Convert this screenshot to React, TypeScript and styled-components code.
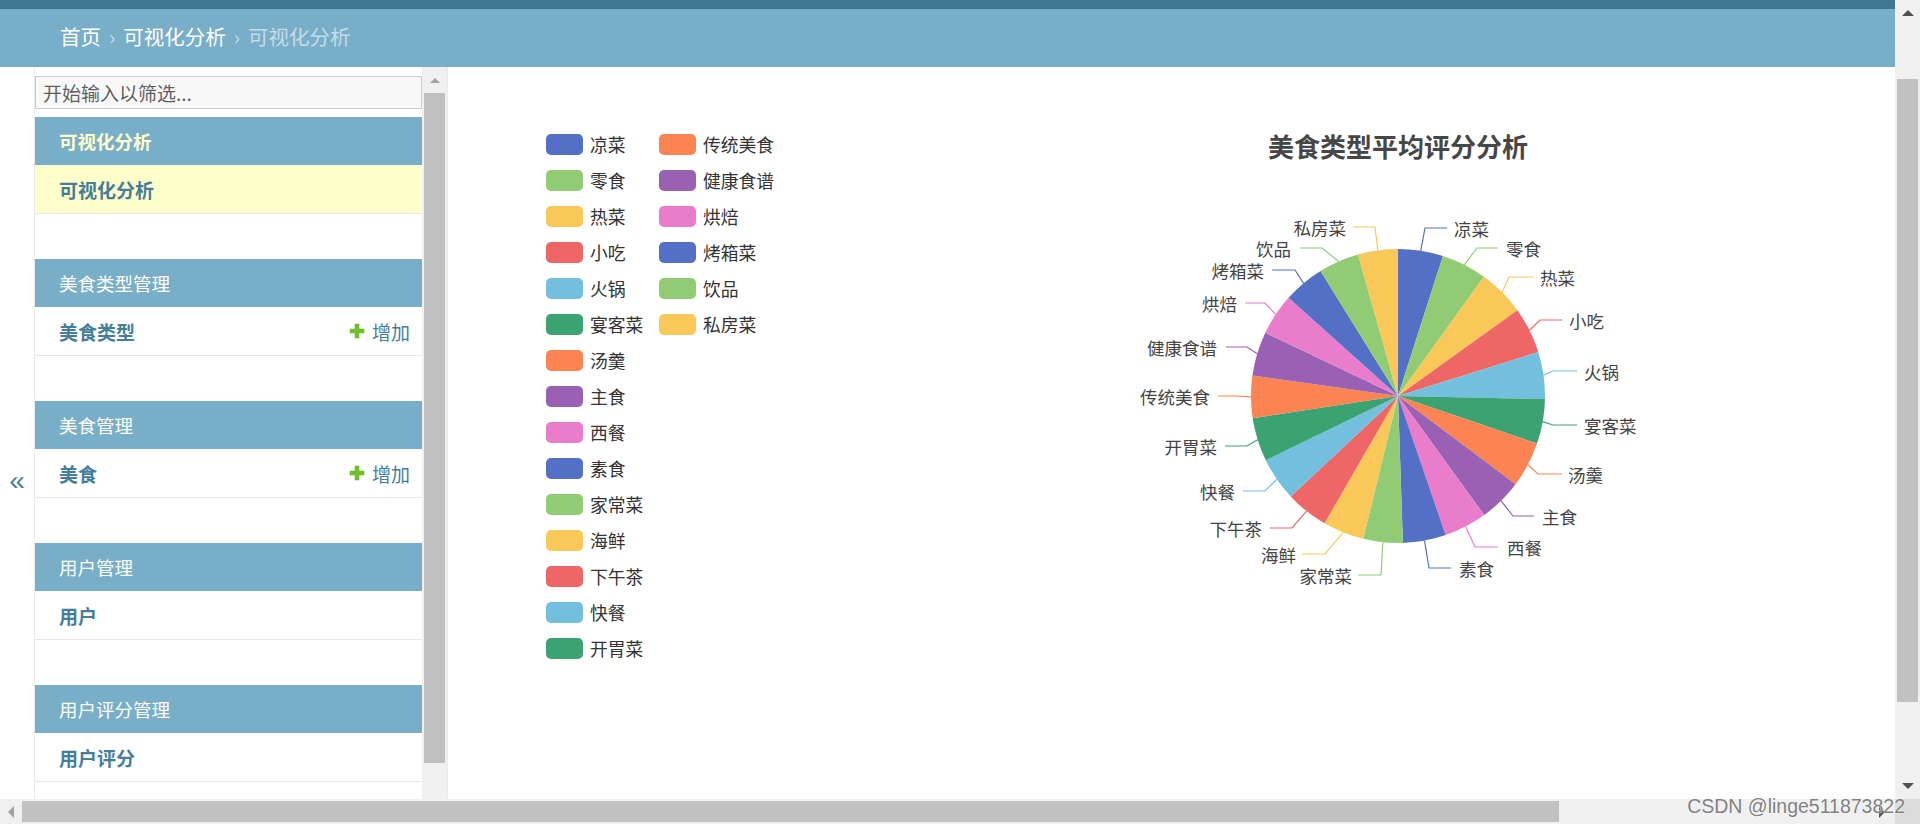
import styled, { createGlobalStyle } from "styled-components";

const GlobalStyle = createGlobalStyle`
  html, body {
    margin: 0;
    padding: 0;
    width: 1920px;
    height: 824px;
    overflow: hidden;
    background: #fff;
  }
  body {
    font-family: "Noto Sans CJK SC", "Noto Sans", "Liberation Sans", sans-serif;
  }
`;

const PALETTE = ["#5470c6", "#91cc75", "#fac858", "#ee6666", "#73c0de", "#3ba272", "#fc8452", "#9a60b4", "#ea7ccc"];

// name, end angle of the slice (deg, clockwise from 12 o'clock), label elbow, line end x, text x
const foods: { name: string; end: number; elbow: [number, number]; lineEnd: number; textX: number }[] = [
  { name: "凉菜", end: 17.8, elbow: [1425, 228], lineEnd: 1447, textX: 1454 },
  { name: "零食", end: 35.8, elbow: [1477, 248], lineEnd: 1498, textX: 1506 },
  { name: "热菜", end: 54.3, elbow: [1509, 277], lineEnd: 1533, textX: 1540 },
  { name: "小吃", end: 72.6, elbow: [1540, 320], lineEnd: 1562, textX: 1569 },
  { name: "火锅", end: 91.2, elbow: [1553, 371], lineEnd: 1577, textX: 1584 },
  { name: "宴客菜", end: 108.9, elbow: [1553, 425], lineEnd: 1577, textX: 1584 },
  { name: "汤羹", end: 126.9, elbow: [1538, 474], lineEnd: 1562, textX: 1568 },
  { name: "主食", end: 144.1, elbow: [1513, 516], lineEnd: 1534, textX: 1542 },
  { name: "西餐", end: 161.1, elbow: [1475, 547], lineEnd: 1498, textX: 1507 },
  { name: "素食", end: 178.1, elbow: [1429, 568], lineEnd: 1451, textX: 1459 },
  { name: "家常菜", end: 193.7, elbow: [1381, 575], lineEnd: 1358, textX: 1352 },
  { name: "海鲜", end: 210, elbow: [1325, 554], lineEnd: 1302, textX: 1296 },
  { name: "下午茶", end: 226.9, elbow: [1292, 528], lineEnd: 1270, textX: 1262 },
  { name: "快餐", end: 244.1, elbow: [1265, 491], lineEnd: 1243, textX: 1235 },
  { name: "开胃菜", end: 261.3, elbow: [1247, 446], lineEnd: 1225, textX: 1217 },
  { name: "传统美食", end: 278, elbow: [1236, 396], lineEnd: 1218, textX: 1210 },
  { name: "健康食谱", end: 295.5, elbow: [1247, 347], lineEnd: 1226, textX: 1217 },
  { name: "烘焙", end: 311.9, elbow: [1265, 303], lineEnd: 1245, textX: 1237 },
  { name: "烤箱菜", end: 328.2, elbow: [1295, 270], lineEnd: 1272, textX: 1264 },
  { name: "饮品", end: 344.2, elbow: [1322, 248], lineEnd: 1300, textX: 1291 },
  { name: "私房菜", end: 360, elbow: [1375, 227], lineEnd: 1353, textX: 1346 },
];

const modules = [
  { title: "可视化分析", model: "可视化分析", current: true, add: false },
  { title: "美食类型管理", model: "美食类型", current: false, add: true },
  { title: "美食管理", model: "美食", current: false, add: true },
  { title: "用户管理", model: "用户", current: false, add: false },
  { title: "用户评分管理", model: "用户评分", current: false, add: false },
];

const CX = 1398;
const CY = 396;
const R = 147;

const pt = (deg: number, r = R) => {
  const a = (deg * Math.PI) / 180;
  return [CX + r * Math.sin(a), CY - r * Math.cos(a)];
};

const slicePath = (a0: number, a1: number) => {
  const [x0, y0] = pt(a0);
  const [x1, y1] = pt(a1);
  const large = a1 - a0 > 180 ? 1 : 0;
  return `M ${CX} ${CY} L ${x0} ${y0} A ${R} ${R} 0 ${large} 1 ${x1} ${y1} Z`;
};

const PlusIcon = () => (
  <svg width="16" height="16" viewBox="0 0 16 16">
    <path d="M6 1h4v5h5v4h-5v5H6v-5H1V6h5z" fill="#70bf2b" stroke="#70bf2b" strokeWidth="0.6" strokeLinejoin="round" />
  </svg>
);

const PieChart = () => (
  <PieSvg width="540" height="460" viewBox="1128 166 540 460">
    {foods.map((f, i) => {
      const start = i === 0 ? 0 : foods[i - 1].end;
      const color = PALETTE[i % PALETTE.length];
      return <path key={f.name} d={slicePath(start, f.end)} fill={color} />;
    })}
    {foods.map((f, i) => {
      const start = i === 0 ? 0 : foods[i - 1].end;
      const color = PALETTE[i % PALETTE.length];
      const [sx, sy] = pt((start + f.end) / 2);
      const right = f.textX > CX;
      return (
        <g key={f.name}>
          <path
            d={`M ${sx} ${sy} L ${f.elbow[0]} ${f.elbow[1]} L ${f.lineEnd} ${f.elbow[1]}`}
            fill="none"
            stroke={color}
            strokeWidth="1.2"
          />
          <text
            x={f.textX}
            y={f.elbow[1]}
            textAnchor={right ? "start" : "end"}
            dominantBaseline="central"
            fontSize="17.5"
            fill="#444"
          >
            {f.name}
          </text>
        </g>
      );
    })}
  </PieSvg>
);

const App = () => (
  <>
    <GlobalStyle />
    <Screen>
      <Page>
        <TopBar />
        <Header>
          <Crumbs>
            <CrumbLink>首页</CrumbLink>
            <Sep>›</Sep>
            <CrumbLink>可视化分析</CrumbLink>
            <Sep>›</Sep>
            可视化分析
          </Crumbs>
        </Header>
        <Body>
          <ToggleColumn>
            <ToggleButton>«</ToggleButton>
          </ToggleColumn>
          <Sidebar>
            <SidebarScroll>
              <FilterInput placeholder="开始输入以筛选..." />
              {modules.map((m) => (
                <Module key={m.title}>
                  <Caption $current={m.current}>{m.title}</Caption>
                  <ModelRow $current={m.current}>
                    <ModelName>{m.model}</ModelName>
                    {m.add && (
                      <AddLink>
                        <PlusIcon />
                        增加
                      </AddLink>
                    )}
                  </ModelRow>
                </Module>
              ))}
            </SidebarScroll>
            <SideBar>
              <SmallUp />
              <SideThumb />
            </SideBar>
          </Sidebar>
          <Main>
            <Legend>
              {foods.map((f, i) => (
                <LegendItem key={f.name}>
                  <Swatch $color={PALETTE[i % PALETTE.length]} />
                  {f.name}
                </LegendItem>
              ))}
            </Legend>
            <ChartPanel>
              <ChartTitle>美食类型平均评分分析</ChartTitle>
              <PieChart />
            </ChartPanel>
          </Main>
        </Body>
      </Page>
      <VScroll>
        <UpArrow />
        <VThumb />
        <DownArrow />
      </VScroll>
      <HScroll>
        <LeftArrow />
        <HThumb />
        <RightArrow />
      </HScroll>
      <Corner />
      <Watermark>CSDN @linge511873822</Watermark>
    </Screen>
  </>
);

const Screen = styled.div`
  position: relative;
  width: 1920px;
  height: 824px;
  display: grid;
  grid-template-columns: 1895px 25px;
  grid-template-rows: 799px 25px;
  overflow: hidden;
`;

const Page = styled.div`
  display: flex;
  flex-direction: column;
  overflow: hidden;
`;

const TopBar = styled.div`
  height: 9px;
  background: #417690;
  flex-shrink: 0;
`;

const Header = styled.div`
  height: 58px;
  flex-shrink: 0;
  background: #79aec8;
  display: flex;
  align-items: center;
  padding-left: 60px;
`;

const Crumbs = styled.div`
  font-size: 20.5px;
  line-height: 28px;
  color: #c4dce8;
  margin-top: -4px;
`;

const CrumbLink = styled.span`
  color: #fff;
`;

const Sep = styled.span`
  margin: 0 8px;
`;

const Body = styled.div`
  flex: 1;
  min-height: 0;
  display: flex;
`;

const ToggleColumn = styled.div`
  width: 34px;
  flex-shrink: 0;
  display: flex;
  justify-content: center;
`;

const ToggleButton = styled.div`
  margin-top: 399px;
  height: 30px;
  font-family: "Liberation Sans", Arial, sans-serif;
  font-size: 28px;
  line-height: 30px;
  color: #447e9b;
`;

const Sidebar = styled.nav`
  display: flex;
  flex-shrink: 0;
  border-left: 1px solid #eaeaea;
  border-right: 1px solid #eaeaea;
`;

const SidebarScroll = styled.div`
  width: 387px;
  overflow: hidden;
`;

const FilterInput = styled.input`
  display: block;
  box-sizing: border-box;
  width: 100%;
  height: 33px;
  margin: 9px 0 8px;
  padding: 0 7px;
  border: 1px solid #ccc;
  background: #f8f8f8;
  font-family: inherit;
  font-size: 19px;
  color: #333;
  outline: none;

  &::placeholder {
    color: #5f5f5f;
  }
`;

const Module = styled.div`
  margin-bottom: 45px;
`;

const Caption = styled.div<{ $current: boolean }>`
  height: 48px;
  display: flex;
  align-items: center;
  padding-left: 24px;
  background: #79aec8;
  color: ${(p) => (p.$current ? "#ffc" : "#fff")};
  font-weight: ${(p) => (p.$current ? "bold" : "normal")};
  font-size: 18.5px;
`;

const ModelRow = styled.div<{ $current: boolean }>`
  height: 48px;
  display: flex;
  align-items: center;
  justify-content: space-between;
  padding: 0 12px 0 24px;
  border-bottom: 1px solid #e8e8e8;
  background: ${(p) => (p.$current ? "#ffc" : "#fff")};
`;

const ModelName = styled.span`
  font-size: 19px;
  font-weight: bold;
  color: #447e9b;
`;

const AddLink = styled.span`
  display: flex;
  align-items: center;
  gap: 7px;
  font-size: 19px;
  color: #447e9b;
`;

const SideBar = styled.div`
  width: 25px;
  background: #f0f0f0;
  display: flex;
  flex-direction: column;
  align-items: flex-start;
  padding-top: 11px;
  box-sizing: border-box;
`;

const SmallUp = styled.div`
  align-self: center;
  width: 0;
  height: 0;
  border-left: 5px solid transparent;
  border-right: 5px solid transparent;
  border-bottom: 5px solid #a3a3a3;
`;

const SideThumb = styled.div`
  margin: 10px 0 0 2px;
  width: 21px;
  height: 670px;
  background: #c1c1c1;
`;

const Main = styled.main`
  flex: 1;
  display: flex;
  align-items: flex-start;
  padding: 59px 0 0 98px;
`;

const Legend = styled.div`
  width: 240px;
  flex-shrink: 0;
  display: grid;
  grid-auto-flow: column;
  grid-template-rows: repeat(15, 36px);
  grid-template-columns: 113px auto;
`;

const LegendItem = styled.div`
  display: flex;
  align-items: center;
  gap: 7px;
  font-size: 17.8px;
  color: #333;
  white-space: nowrap;
`;

const Swatch = styled.span<{ $color: string }>`
  width: 37px;
  height: 21px;
  border-radius: 5px;
  background: ${(p) => p.$color};
  flex-shrink: 0;
`;

const ChartPanel = styled.div`
  margin-left: 342px;
  width: 540px;
  flex-shrink: 0;
  display: flex;
  flex-direction: column;
`;

const ChartTitle = styled.h2`
  margin: 0;
  height: 40px;
  line-height: 40px;
  font-size: 26px;
  font-weight: bold;
  color: #464646;
  text-align: center;
`;

const PieSvg = styled.svg`
  display: block;
  overflow: visible;
  font-family: "Noto Sans CJK SC", "Noto Sans", sans-serif;
`;

const VScroll = styled.div`
  background: #f0f0f0;
  display: flex;
  flex-direction: column;
  align-items: flex-start;
  padding-top: 10px;
  box-sizing: border-box;
`;

const UpArrow = styled.div`
  align-self: center;
  width: 0;
  height: 0;
  border-left: 6px solid transparent;
  border-right: 6px solid transparent;
  border-bottom: 6px solid #505050;
`;

const VThumb = styled.div`
  margin: 63px 0 0 2px;
  width: 21px;
  height: 623px;
  background: #c1c1c1;
`;

const DownArrow = styled.div`
  align-self: center;
  margin-top: auto;
  margin-bottom: 10px;
  width: 0;
  height: 0;
  border-left: 6px solid transparent;
  border-right: 6px solid transparent;
  border-top: 6px solid #505050;
`;

const HScroll = styled.div`
  background: #f0f0f0;
  display: flex;
  align-items: center;
`;

const LeftArrow = styled.div`
  margin-left: 8px;
  width: 0;
  height: 0;
  border-top: 6px solid transparent;
  border-bottom: 6px solid transparent;
  border-right: 6px solid #a3a3a3;
`;

const HThumb = styled.div`
  margin-left: 8px;
  width: 1537px;
  height: 21px;
  background: #c1c1c1;
`;

const RightArrow = styled.div`
  margin-left: auto;
  margin-right: 10px;
  width: 0;
  height: 0;
  border-top: 6px solid transparent;
  border-bottom: 6px solid transparent;
  border-left: 6px solid #505050;
`;

const Corner = styled.div`
  background: #dcdcdc;
`;

const Watermark = styled.div`
  position: absolute;
  right: 15px;
  bottom: 7px;
  font-family: "Liberation Sans", Arial, sans-serif;
  font-size: 19.5px;
  line-height: 22px;
  color: #808080;
  text-shadow: 0 0 1px #fff, 0 0 2px rgba(255, 255, 255, 0.8);
  white-space: nowrap;
`;

export default App;
